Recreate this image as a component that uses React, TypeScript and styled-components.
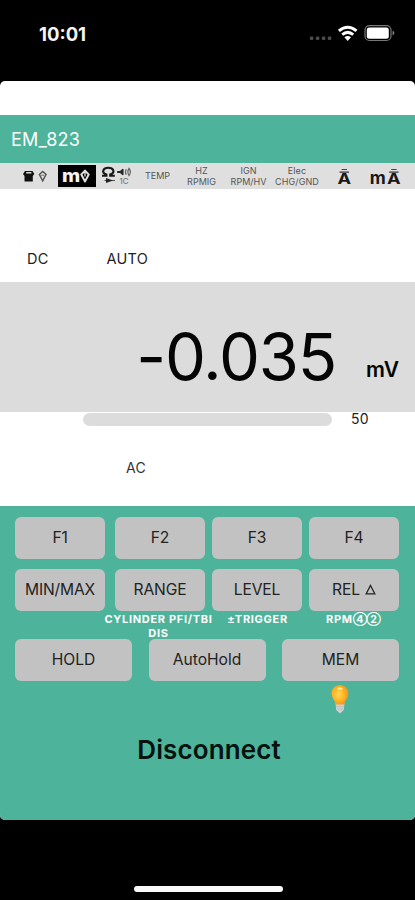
import React from "react";
import styled, { createGlobalStyle } from "styled-components";

const GlobalStyle = createGlobalStyle`
  * { box-sizing: border-box; }
  body { margin: 0; background: #000; font-family: Inter, "Liberation Sans", sans-serif; }
`;

const Screen = styled.div`
  width: 415px;
  height: 900px;
  display: flex;
  flex-direction: column;
  background: #000;
  overflow: hidden;
`;

const StatusBar = styled.header`
  height: 81px;
  flex: none;
  display: flex;
  align-items: flex-start;
  justify-content: space-between;
  padding: 22px 19px 0 39px;
`;

const Clock = styled.span`
  color: #f4f4f4;
  font-size: 18.5px;
  line-height: 24px;
  font-weight: 650;
  letter-spacing: 0;
`;

const StatusIcons = styled.svg`
  width: 88px;
  height: 24px;
`;

const Card = styled.main`
  height: 738.5px;
  flex: none;
  display: flex;
  flex-direction: column;
  border-radius: 5px;
  overflow: hidden;
  background: #fff;
`;

const TitleBar = styled.div`
  margin-top: 34px;
  height: 48px;
  flex: none;
  padding-left: 11px;
  background: #4db39a;
  color: #fff;
  font-size: 18px;
  line-height: 49px;
  letter-spacing: 0.25px;
`;

const ModeStrip = styled.nav`
  height: 26px;
  margin-bottom: 1px;
  flex: none;
  display: grid;
  grid-template-columns: 58px 38px 43px 37px 51px 43px 54px 40px 51px;
  align-items: center;
  background: #dfdfdf;
`;

const Mode = styled.div<{ $active?: boolean }>`
  height: ${(p) => (p.$active ? "22px" : "26px")};
  display: flex;
  align-items: center;
  justify-content: center;
  background: ${(p) => (p.$active ? "#000" : "transparent")};
  svg { display: block; flex: none; }
`;

const ModeLabel = styled.span<{ $spacing?: string }>`
  color: #555;
  padding-top: 1px;
  font-size: 9px;
  line-height: 10.5px;
  text-align: center;
  white-space: pre;
  letter-spacing: ${(p) => p.$spacing ?? "0"};
`;

const Flags = styled.div`
  height: 92px;
  flex: none;
  display: flex;
  gap: 58px;
  padding: 58px 0 0 27px;
  font-size: 14.5px;
  line-height: 21px;
  color: #222;
  letter-spacing: 0.25px;
`;

const Reading = styled.section`
  height: 129.5px;
  flex: none;
  display: flex;
  align-items: flex-start;
  justify-content: flex-end;
  padding: 35px 16px 0 0;
  background: #dcdcdc;
  color: #050505;
`;

const Value = styled.span`
  font-size: 65px;
  line-height: 80px;
  letter-spacing: -1.2px;
  margin-right: 30px;
`;

const Unit = styled.span`
  padding-top: 39px;
  font-size: 21px;
  line-height: 28px;
  font-weight: 600;
  letter-spacing: -0.1px;
`;

const Scale = styled.div`
  height: 15px;
  flex: none;
  display: flex;
  align-items: center;
  padding-left: 83px;
`;

const Track = styled.div`
  width: 249px;
  height: 13px;
  border-radius: 7px;
  background: #dcdcdc;
`;

const ScaleMax = styled.span`
  margin-left: 19px;
  font-size: 14px;
  line-height: 14px;
  color: #222;
  letter-spacing: 0.3px;
`;

const AcFlag = styled.div`
  height: 79.5px;
  flex: none;
  padding: 30px 0 0 126px;
  font-size: 14px;
  line-height: 21px;
  color: #333;
  letter-spacing: 0.3px;
`;

const Keypad = styled.section`
  flex: 1;
  padding: 11px 16px 0 15px;
  background: #4db39a;
`;

const QuadRow = styled.div`
  display: grid;
  grid-template-columns: 93px repeat(3, 90px);
  column-gap: 7px;
  margin-bottom: 10px;
`;

const TripleRow = styled.div`
  display: grid;
  grid-template-columns: repeat(3, 117px);
  justify-content: space-between;
`;

const Key = styled.button<{ $wide?: boolean }>`
  width: ${(p) => (p.$wide ? "117px" : "90px")};
  height: 42px;
  padding: 0;
  border: 0;
  border-radius: 6px;
  background: #c2c2c2;
  color: #222;
  font-family: inherit;
  font-size: 15.6px;
  line-height: 42px;
  letter-spacing: ${(p) => (p.$wide ? "0" : "-0.15px")};
  white-space: nowrap;
`;

const Delta = styled.svg`
  width: 11px;
  height: 11px;
  margin-left: 5px;
`;

const Captions = styled.div`
  height: 27px;
  margin: -9px -14px 0 85px;
  padding-top: 1px;
  display: grid;
  grid-template-columns: 117px 81px 110px;
  align-items: start;
`;

const Caption = styled.span`
  color: #fff;
  font-size: 11px;
  line-height: 13.5px;
  font-weight: 700;
  letter-spacing: 0.7px;
  text-align: center;
  white-space: pre;
`;

const Circled = styled.span`
  font-size: 10.5px;
  line-height: 1;
  letter-spacing: -1px;
`;

const Lamp = styled.div`
  height: 34px;
  padding: 3px 0 0 316px;
  svg { display: block; }
`;

const Disconnect = styled.button`
  display: block;
  width: 100%;
  margin-top: 16px;
  padding: 0 0 0 4px;
  border: 0;
  background: transparent;
  color: #07120f;
  font-family: inherit;
  font-size: 26px;
  line-height: 38px;
  font-weight: 600;
  letter-spacing: 0.1px;
`;

const HomeArea = styled.footer`
  flex: 1;
  display: flex;
  align-items: flex-end;
  justify-content: center;
  padding: 0 0 8px 1px;
`;

const HomeBar = styled.div`
  width: 149px;
  height: 6.5px;
  border-radius: 4px;
  background: #fafafa;
`;

const SystemIcons = () => (
  <StatusIcons viewBox="0 0 88 24">
    {[1.8, 7.8, 13.8, 19.8].map((x) => (
      <rect key={x} x={x} y="14.5" width="3.6" height="3.6" rx="1.3" fill="#4c4c4c" />
    ))}
    <g fill="none" stroke="#fff" strokeWidth="3">
      <path d="M30.9 8.8Q39.7 1.8 48.5 8.8" />
      <path d="M34.2 12.6Q39.7 8.2 45.2 12.6" />
    </g>
    <path d="M36.4 15.2Q39.7 12.6 43 15.2L39.7 19Z" fill="#fff" />
    <rect x="57" y="3.7" width="26" height="14.8" rx="4.5" fill="none" stroke="#777" strokeWidth="1.2" />
    <rect x="58.8" y="5.4" width="22" height="11.4" rx="2.5" fill="#fff" />
    <path d="M84.6 8.5Q88.2 11 84.6 13.5Z" fill="#888" />
  </StatusIcons>
);

const VoltageIcon = () => (
  <svg width="58" height="26" viewBox="0 0 58 26">
    <path d="M25 8H32.5L34.3 11L32.8 13V18.5H24.5V13L23 11Z" fill="#111" />
    <path d="M26.2 9.8H31.4" stroke="#ddd" strokeWidth="1.5" />
    <path d="M39.4 11.5L42.7 8.5L46 11.5L42.7 17.8Z" fill="none" stroke="#555" strokeWidth="1.5" />
    <path d="M41.2 12.3H44.2" stroke="#777" />
  </svg>
);

const MilliLabel = styled.span`
  color: #f4f4f4;
  font-size: 17.5px;
  line-height: 20px;
  font-weight: 800;
  transform: scaleX(1.12);
`;

const MilliMode = () => (
  <>
    <MilliLabel>m</MilliLabel>
    <svg width="12" height="19" viewBox="0 0 12 19">
      <path d="M2.3 7.5L6 3.6L9.7 7.5L6 14.5Z" fill="none" stroke="#ddd" strokeWidth="2" strokeLinejoin="round" />
      <path d="M6 5.5V9.5" stroke="#ddd" strokeWidth="1.3" />
    </svg>
  </>
);

const OhmIcon = () => (
  <svg width="43" height="26" viewBox="0 0 43 26">
    <path d="M6 12.7H10.4V11.5C4.8 9.2 7.2 4.8 12.3 4.8S19.8 9.2 14.2 11.5V12.7H18.8" fill="none" stroke="#181818" strokeWidth="2.1" />
    <path d="M21.5 8.5H24L27 6V12L24 9.5H21.5Z" fill="#222" stroke="#222" />
    <path d="M30.3 6.2Q28.5 9 30.3 11.8M32.5 5Q36.3 9 32.5 13M33.5 5Q30.2 9 33.5 13" fill="none" stroke="#666" strokeWidth="1.2" />
    <path d="M8.5 17.5H19" stroke="#555" />
    <path d="M10 15L17 17.5L10 20Z" fill="#222" />
    <text x="23.5" y="21" fontSize="8" fill="#666" fontFamily="Inter, sans-serif">1C</text>
  </svg>
);

const AmpIcon = ({ milli = false }: { milli?: boolean }) => (
  <svg width={milli ? 51 : 40} height="26" viewBox={milli ? "0 0 51 26" : "0 0 40 26"}>
    {milli && (
      <text x="5.8" y="20.8" fontSize="17" fontWeight="700" textLength="16" lengthAdjust="spacingAndGlyphs" fill="#181818" fontFamily="Inter, sans-serif">m</text>
    )}
    <g transform={milli ? "translate(9.6 0)" : undefined}>
      <path d="M17.6 6.5H23" stroke="#444" strokeWidth="1.2" />
      <path d="M15.5 9.1H25" stroke="#333" strokeWidth="1.3" />
      <text x="13.5" y="20.9" fontSize="14.5" fontWeight="700" textLength="13.6" lengthAdjust="spacingAndGlyphs" fill="#181818" fontFamily="Inter, sans-serif">A</text>
    </g>
  </svg>
);

const Bulb = () => (
  <svg width="18" height="30" viewBox="0 0 18 30">
    <defs>
      <radialGradient id="bulbGlow" cx="42%" cy="48%" r="60%">
        <stop offset="0" stopColor="#ffd958" />
        <stop offset=".55" stopColor="#ffb425" />
        <stop offset="1" stopColor="#ed9416" />
      </radialGradient>
    </defs>
    <path d="M4.5 19H13.5L12.8 26L9 29.5L5.2 26Z" fill="#d0d0d0" />
    <path d="M5.3 22.5H12.7M6 25H12" stroke="#b5b5b5" strokeWidth=".7" />
    <path d="M9 1C3.8 1 .6 4.7.6 9.4C.6 14 4 16 4.7 20.5H13.3C14 16 17.4 14 17.4 9.4C17.4 4.7 14.2 1 9 1Z" fill="url(#bulbGlow)" />
    <path d="M6.4 4.2Q9 2.5 11.7 4.2L10.7 6Q8.8 5 7.2 6Z" fill="#ffe998" />
  </svg>
);

export default function App() {
  return (
    <>
      <GlobalStyle />
      <Screen>
        <StatusBar>
          <Clock>10:01</Clock>
          <SystemIcons />
        </StatusBar>
        <Card>
          <TitleBar>EM_823</TitleBar>
          <ModeStrip>
            <Mode><VoltageIcon /></Mode>
            <Mode $active><MilliMode /></Mode>
            <Mode><OhmIcon /></Mode>
            <Mode><ModeLabel>TEMP</ModeLabel></Mode>
            <Mode><ModeLabel>{"HZ\nRPMIG"}</ModeLabel></Mode>
            <Mode><ModeLabel>{"IGN\nRPM/HV"}</ModeLabel></Mode>
            <Mode><ModeLabel $spacing="0.1px">{"Elec\nCHG/GND"}</ModeLabel></Mode>
            <Mode><AmpIcon /></Mode>
            <Mode><AmpIcon milli /></Mode>
          </ModeStrip>
          <Flags>
            <span>DC</span>
            <span>AUTO</span>
          </Flags>
          <Reading>
            <Value>-0.035</Value>
            <Unit>mV</Unit>
          </Reading>
          <Scale>
            <Track />
            <ScaleMax>50</ScaleMax>
          </Scale>
          <AcFlag>AC</AcFlag>
          <Keypad>
            <QuadRow>
              {["F1", "F2", "F3", "F4"].map((k) => <Key key={k}>{k}</Key>)}
            </QuadRow>
            <QuadRow>
              {["MIN/MAX", "RANGE", "LEVEL"].map((k) => <Key key={k}>{k}</Key>)}
              <Key>
                REL
                <Delta viewBox="0 0 11 11">
                  <path d="M5.5 1.5L9.8 9.8H1.2Z" fill="none" stroke="#222" strokeWidth="1.3" />
                </Delta>
              </Key>
            </QuadRow>
            <Captions>
              <Caption>{"CYLINDER PFI/TBI\nDIS"}</Caption>
              <Caption>±TRIGGER</Caption>
              <Caption>RPM<Circled>④②</Circled></Caption>
            </Captions>
            <TripleRow>
              {["HOLD", "AutoHold", "MEM"].map((k) => <Key $wide key={k}>{k}</Key>)}
            </TripleRow>
            <Lamp><Bulb /></Lamp>
            <Disconnect>Disconnect</Disconnect>
          </Keypad>
        </Card>
        <HomeArea><HomeBar /></HomeArea>
      </Screen>
    </>
  );
}
